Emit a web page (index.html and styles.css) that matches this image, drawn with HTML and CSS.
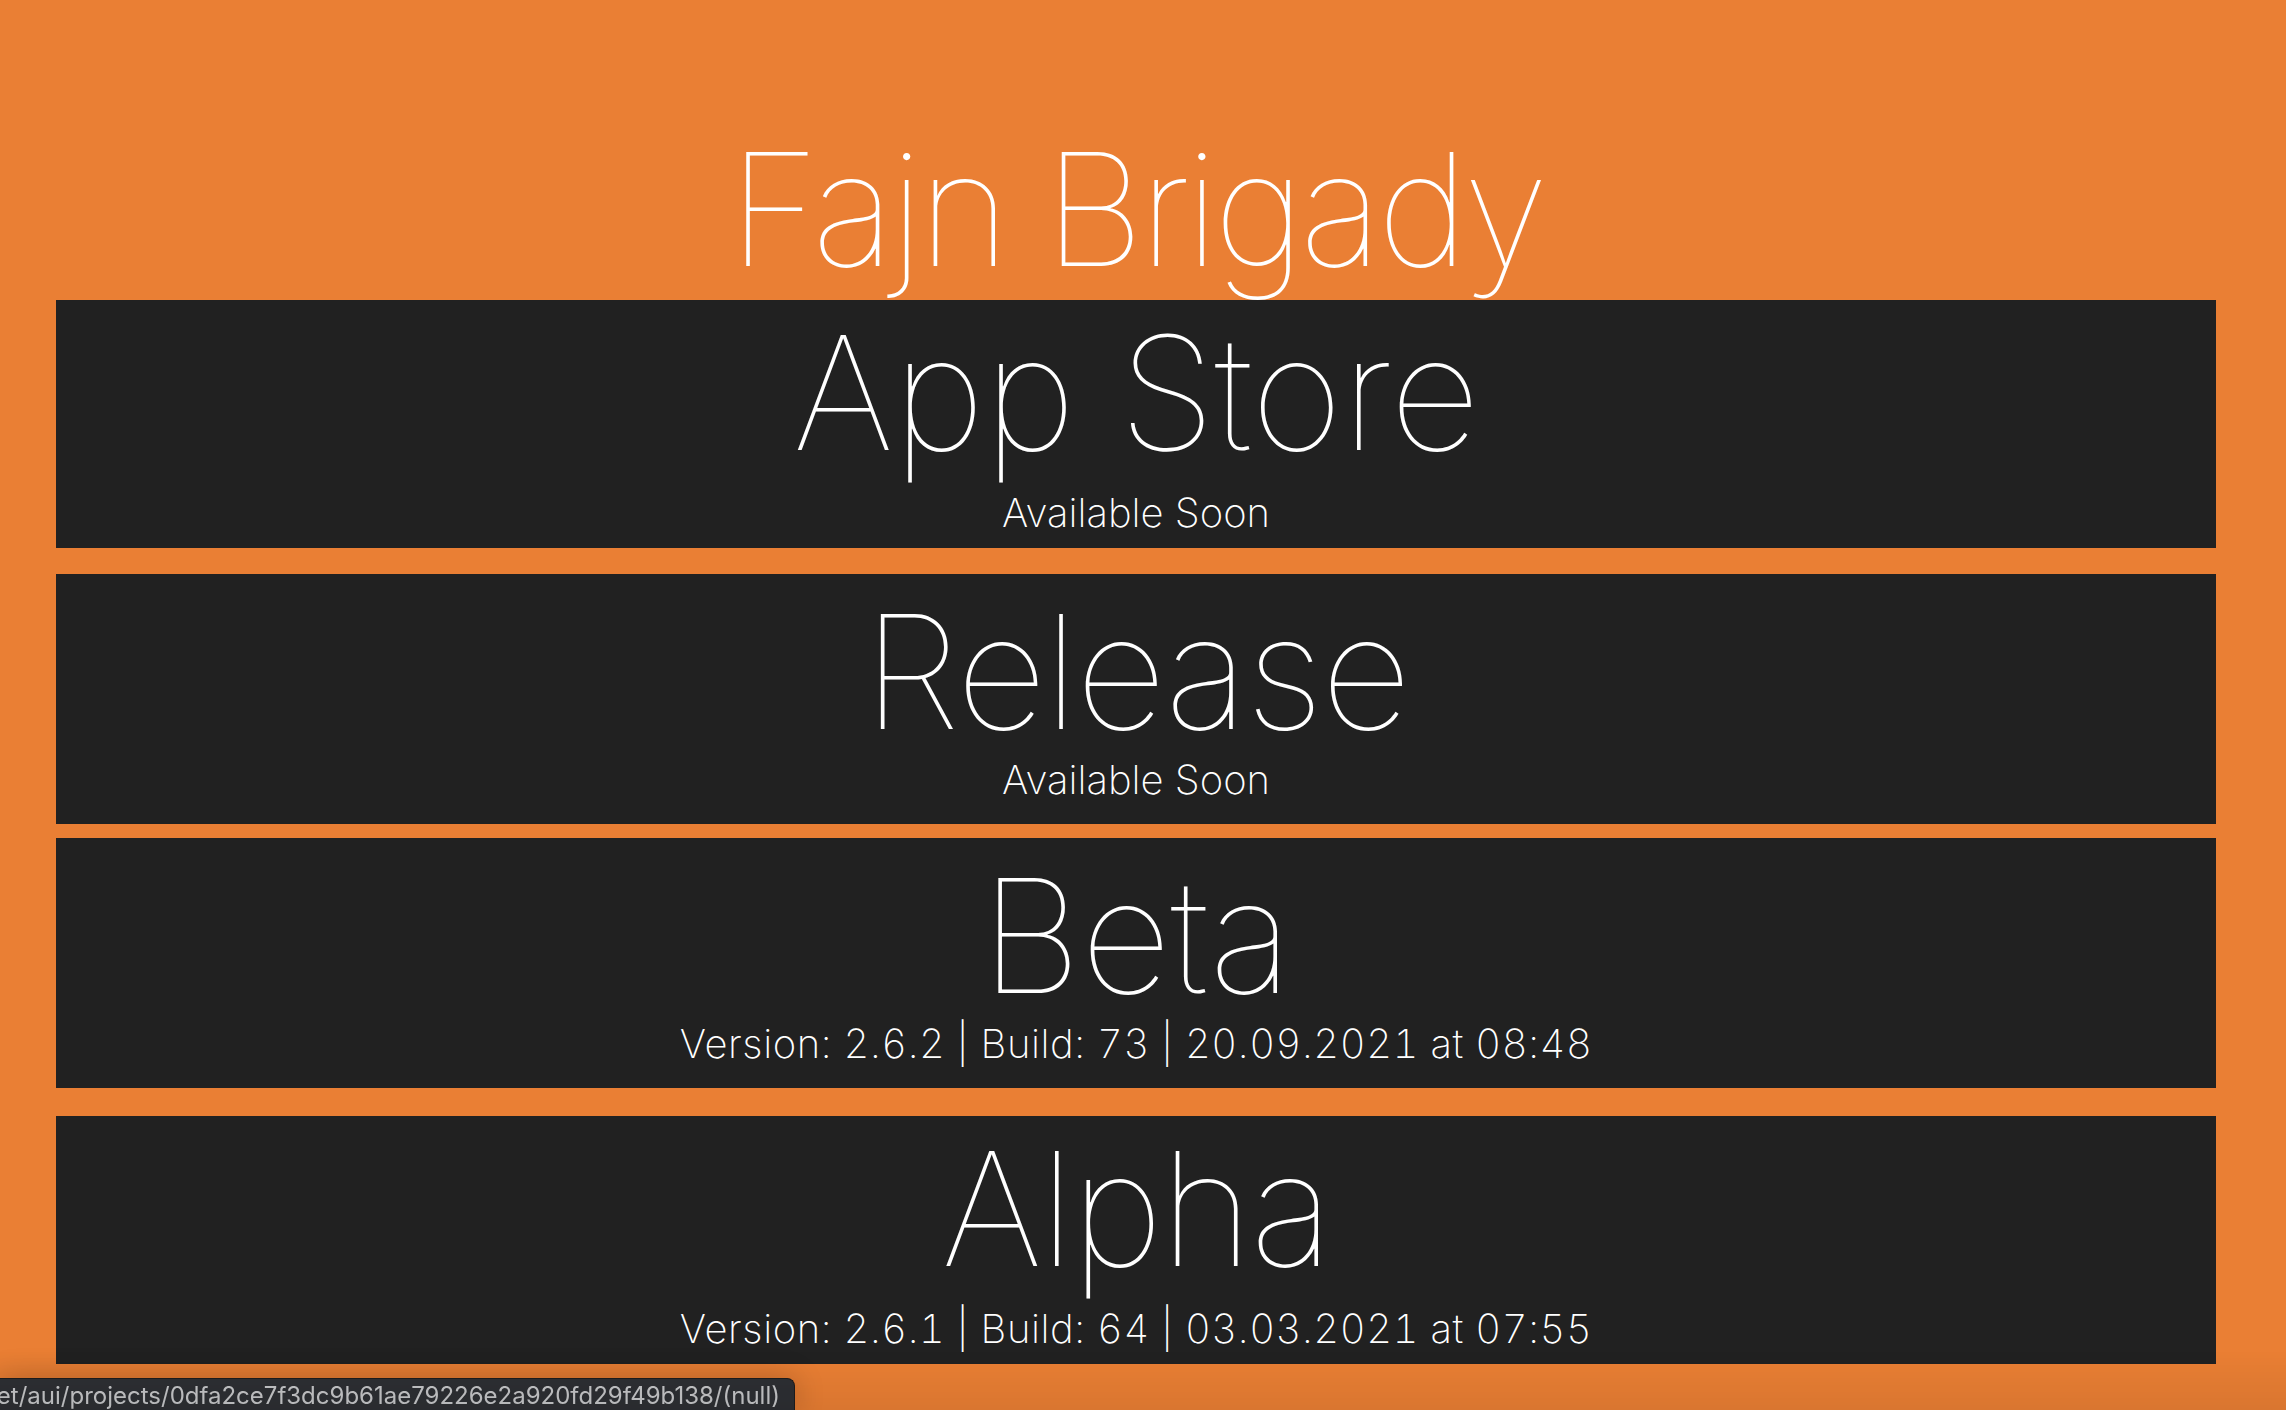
FILE: index.html
```html
<!DOCTYPE html>
<html lang="en">
<head>
<meta charset="utf-8">
<title>Fajn Brigady</title>
<link rel="stylesheet" href="styles.css">
</head>
<body>
<header class="header">
  <h1 class="header__title">Fajn Brigady</h1>
</header>
<main class="channels">
  <section class="card card--first card--low">
    <h2 class="card__title card__title--wide">App Store</h2>
    <p class="card__info">Available Soon</p>
  </section>
  <section class="card card--second card--high">
    <h2 class="card__title">Release</h2>
    <p class="card__info">Available Soon</p>
  </section>
  <section class="card card--third card--high">
    <h2 class="card__title card__title--wide">Beta</h2>
    <p class="card__info card__info--version">Version: 2.6.2 | Build: 73 | 20.09.2021 at 08:48</p>
  </section>
  <section class="card card--fourth card--low">
    <h2 class="card__title">Alpha</h2>
    <p class="card__info card__info--version">Version: 2.6.1 | Build: 64 | 03.03.2021 at 07:55</p>
  </section>
</main>
<div class="status-url"><span class="status-url__text">et/aui/projects/0dfa2ce7f3dc9b61ae79226e2a920fd29f49b138/(null)</span></div>
</body>
</html>
```
FILE: styles.css
```css
html, body {
  margin: 0;
  padding: 0;
}
body {
  background: #ea7f34;
  color: #ffffff;
  font-family: Inter, "Liberation Sans", sans-serif;
  min-height: 1410px;
  overflow: hidden;
}
.header {
  padding: 130px 70px 0 56px;
  margin-bottom: 12px;
  text-align: center;
}
.header__title {
  margin: 0;
  font-size: 157px;
  line-height: 158px;
  font-weight: 100;
  letter-spacing: -0.033em;
}
.channels {
  display: flex;
  flex-direction: column;
  padding: 0 70px 0 56px;
}
.card {
  background: #212121;
  height: 248px;
  box-sizing: border-box;
  display: flex;
  flex-direction: column;
  align-items: center;
  text-align: center;
}
.card--second { margin-top: 26px; height: 250px; }
.card--third { margin-top: 14px; height: 250px; }
.card--fourth { margin-top: 28px; }
.card__title {
  margin: 0;
  font-size: 158px;
  line-height: 158px;
  font-weight: 100;
  letter-spacing: -0.016em;
  white-space: nowrap;
}
.card__title--wide {
  letter-spacing: -0.005em;
}
.card__info {
  margin: 0;
  font-size: 40px;
  line-height: 40px;
  font-weight: 200;
  white-space: nowrap;
}
.card__info--version {
  font-variant-numeric: tabular-nums;
  letter-spacing: 0.6px;
}
.card--low { padding-top: 14px; }
.card--low .card__info { margin-top: 21px; }
.card--high { padding-top: 19px; }
.card--high .card__info { margin-top: 9px; }
.status-url {
  position: fixed;
  left: 0;
  bottom: 0;
  width: 795px;
  height: 32px;
  box-sizing: border-box;
  background: #2d2f33;
  border-top: 1px solid #1c1c1e;
  border-right: 1px solid #1c1c1e;
  border-top-right-radius: 8px;
  box-shadow: 0 0 30px rgba(0, 0, 0, 0.22);
  display: flex;
  justify-content: flex-end;
  align-items: flex-end;
  padding-right: 14px;
  overflow: hidden;
}
.status-url__text {
  font-family: Inter, "Liberation Sans", sans-serif;
  font-size: 24px;
  line-height: 29px;
  color: #c4c5c7;
  white-space: nowrap;
}
body::after {
  content: "";
  position: fixed;
  left: 0;
  right: 0;
  bottom: 0;
  height: 60px;
  background: linear-gradient(to bottom, rgba(0, 0, 0, 0), rgba(0, 0, 0, 0.07));
  pointer-events: none;
}
```
